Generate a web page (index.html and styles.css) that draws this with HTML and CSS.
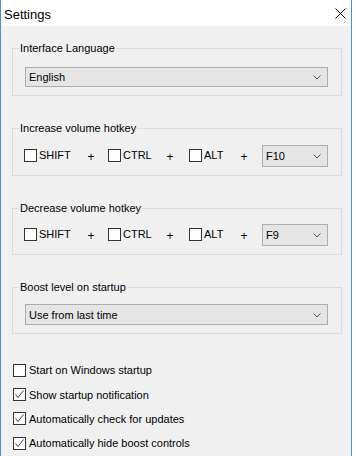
FILE: index.html
```html
<!DOCTYPE html>
<html lang="en">
<head>
    <meta charset="UTF-8">
    <title>Settings</title>
    <link rel="stylesheet" href="styles.css">
</head>
<body>
    <div class="window">
        <div class="title-bar">
            <span class="title">Settings</span>
            <svg class="close" width="11" height="11" viewBox="0 0 11 11">
                <path d="M0.5 0.5 L10.5 10.5 M10.5 0.5 L0.5 10.5" stroke="#000" stroke-width="1" fill="none"/>
            </svg>
        </div>

        <div class="content">
            <fieldset class="group group-select">
                <legend>Interface Language</legend>
                <div class="inner">
                    <div class="combo combo-wide">
                        <span>English</span>
                        <svg class="chevron" width="8" height="5" viewBox="0 0 8 5"><path d="M0.5 0.5 L4 4 L7.5 0.5" stroke="#555" fill="none"/></svg>
                    </div>
                </div>
            </fieldset>

            <fieldset class="group group-hotkey">
                <legend>Increase volume hotkey</legend>
                <div class="inner hotkey-row">
                    <label class="check hk hk-shift"><span class="box"></span>SHIFT</label>
                    <span class="plus">+</span>
                    <label class="check hk hk-ctrl"><span class="box"></span>CTRL</label>
                    <span class="plus">+</span>
                    <label class="check hk hk-alt"><span class="box"></span>ALT</label>
                    <span class="plus">+</span>
                    <div class="combo combo-key">
                        <span>F10</span>
                        <svg class="chevron" width="8" height="5" viewBox="0 0 8 5"><path d="M0.5 0.5 L4 4 L7.5 0.5" stroke="#555" fill="none"/></svg>
                    </div>
                </div>
            </fieldset>

            <fieldset class="group group-hotkey group-decrease">
                <legend>Decrease volume hotkey</legend>
                <div class="inner hotkey-row">
                    <label class="check hk hk-shift"><span class="box"></span>SHIFT</label>
                    <span class="plus">+</span>
                    <label class="check hk hk-ctrl"><span class="box"></span>CTRL</label>
                    <span class="plus">+</span>
                    <label class="check hk hk-alt"><span class="box"></span>ALT</label>
                    <span class="plus">+</span>
                    <div class="combo combo-key">
                        <span>F9</span>
                        <svg class="chevron" width="8" height="5" viewBox="0 0 8 5"><path d="M0.5 0.5 L4 4 L7.5 0.5" stroke="#555" fill="none"/></svg>
                    </div>
                </div>
            </fieldset>

            <fieldset class="group group-select group-boost">
                <legend>Boost level on startup</legend>
                <div class="inner">
                    <div class="combo combo-wide combo-tall">
                        <span>Use from last time</span>
                        <svg class="chevron" width="8" height="5" viewBox="0 0 8 5"><path d="M0.5 0.5 L4 4 L7.5 0.5" stroke="#555" fill="none"/></svg>
                    </div>
                </div>
            </fieldset>

            <div class="options">
                <label class="check option"><span class="box"></span>Start on Windows startup</label>
                <label class="check option"><span class="box checked"><svg width="11" height="11" viewBox="0 0 11 11"><path d="M1.5 5.5 L4 8.5 L9.5 1.5" stroke="#333" fill="none"/></svg></span>Show startup notification</label>
                <label class="check option"><span class="box checked"><svg width="11" height="11" viewBox="0 0 11 11"><path d="M1.5 5.5 L4 8.5 L9.5 1.5" stroke="#333" fill="none"/></svg></span>Automatically check for updates</label>
                <label class="check option"><span class="box checked"><svg width="11" height="11" viewBox="0 0 11 11"><path d="M1.5 5.5 L4 8.5 L9.5 1.5" stroke="#333" fill="none"/></svg></span>Automatically hide boost controls</label>
            </div>
        </div>
    </div>
</body>
</html>
```

FILE: styles.css
```css
body {
    margin: 0;
    background-color: #ffffff;
    font-family: "Liberation Sans", Arial, sans-serif;
    font-size: 11px;
    color: #000;
}

.window {
    width: 350px;
    height: 456px;
    border-left: 1px solid #4f8fcc;
    border-right: 1px solid #4f8fcc;
    background-color: #f0f0f0;
}

.title-bar {
    height: 26px;
    background-color: #ffffff;
    display: flex;
    justify-content: space-between;
    align-items: flex-start;
}

.title {
    font-size: 13px;
    line-height: 23px;
    padding-top: 3px;
    padding-left: 3px;
}

.close {
    margin-top: 8px;
    margin-right: 5px;
}

.content {
    padding: 16px 9px 0 11px;
}

.group {
    margin: 0 0 26px 0;
    padding: 12px 0 8px 6px;
    border: 1px solid #dcdcdc;
    width: 322px;
}

.group legend {
    padding: 0 1px;
    line-height: 13px;
}

.group-hotkey {
    padding-top: 10px;
}

.group-decrease {
    padding-top: 9px;
}

.group-boost {
    padding-top: 10px;
}

.inner {
    margin-left: 5px;
}

.combo {
    box-sizing: border-box;
    height: 20px;
    border: 1px solid #adadad;
    background-color: #e5e5e5;
    display: flex;
    justify-content: space-between;
    align-items: center;
    padding: 0 6px 0 3px;
}

.combo-wide {
    width: 303px;
    margin-left: 1px;
}

.combo-tall {
    height: 21px;
}

.combo-key {
    width: 66px;
    height: 22px;
    margin-left: 11px;
}

.chevron {
    display: block;
    margin-top: 1px;
}

.hotkey-row {
    display: flex;
    align-items: center;
    height: 22px;
}

.check {
    display: flex;
    align-items: center;
}

.box {
    box-sizing: border-box;
    width: 13px;
    height: 13px;
    border: 1px solid #333;
    background-color: #fff;
    display: flex;
    align-items: center;
    justify-content: center;
    flex-shrink: 0;
}

.box svg {
    display: block;
}

.hk {
    margin-top: -2px;
}

.hk .box {
    margin-right: 2px;
}

.hk-shift {
    width: 60px;
}

.hk-ctrl {
    width: 55px;
    margin-left: 10px;
}

.hk-alt {
    width: 48px;
    margin-left: 12px;
}

.plus {
    width: 14px;
    text-align: center;
    font-size: 12px;
    margin-top: 2px;
}

.options {
    margin-top: -2px;
    margin-left: 1px;
}

.option {
    height: 24.4px;
}

.option .box {
    margin-right: 3px;
}
```
